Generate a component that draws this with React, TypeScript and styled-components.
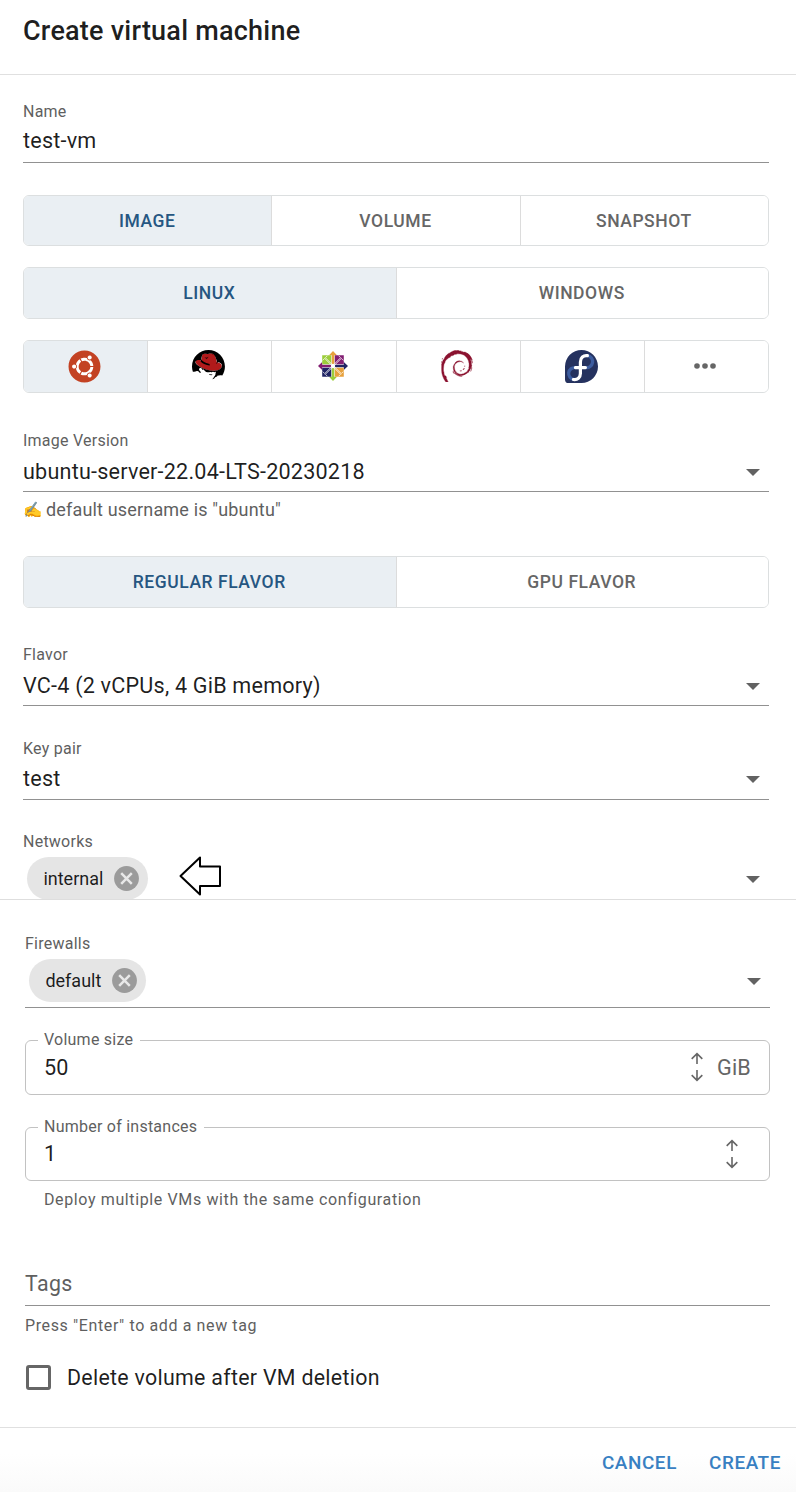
import React from 'react';
import styled, { createGlobalStyle, css } from 'styled-components';
import { SiDebian } from 'react-icons/si';
import { FaUbuntu } from 'react-icons/fa';
import { DiRedhat } from 'react-icons/di';

const GlobalStyle = createGlobalStyle`
  * { box-sizing: border-box; }
  body {
    margin: 0;
    background: #fff;
    color: rgba(0, 0, 0, 0.88);
    font-family: Roboto, "Liberation Sans", sans-serif;
  }
`;

const Dialog = styled.main`
  display: flex;
  flex-direction: column;
  width: 796px;
  height: 1492px;
  overflow: hidden;
`;

const Header = styled.header`
  height: 75px;
  padding: 13px 23px 0;
  border-bottom: 1px solid #e0e0e0;
`;

const Title = styled.h1`
  margin: 0;
  font-size: 27px;
  font-weight: 500;
  line-height: 36px;
  letter-spacing: 0.23px;
`;

const UpperSection = styled.section`
  display: flex;
  flex-direction: column;
  height: 825px;
  padding: 27px 27px 0 23px;
  overflow: hidden;
  border-bottom: 1px solid #dedede;
`;

const LowerSection = styled.section`
  display: flex;
  flex-direction: column;
  height: 528px;
  padding: 34px 26px 0 25px;
  border-bottom: 1px solid #e0e0e0;
`;

const Footer = styled.footer`
  display: flex;
  justify-content: flex-end;
  gap: 32px;
  height: 64px;
  padding: 20px 15px 0 0;
  background: linear-gradient(#fff 40%, #fafafa);
`;

const ActionButton = styled.button`
  height: 30px;
  padding: 0;
  border: 0;
  background: none;
  color: #3880c2;
  font: 500 18.9px/30px Roboto, sans-serif;
  letter-spacing: 0.6px;
`;

const Field = styled.div<{ $top?: number }>`
  flex: none;
  display: flex;
  flex-direction: column;
  margin-top: ${(p) => p.$top ?? 0}px;
  border-bottom: 1px solid #919191;
`;

const Label = styled.label`
  color: #5f5f5f;
  font-size: 16px;
  line-height: 20px;
  letter-spacing: 0.24px;
`;

const ValueRow = styled.div<{ $gap: number; $bottom: number }>`
  display: flex;
  align-items: center;
  justify-content: space-between;
  height: 28px;
  margin: ${(p) => p.$gap}px 0 ${(p) => p.$bottom}px;
  padding-right: 9px;
  font-size: 21.6px;
  line-height: 28px;
  letter-spacing: 0.2px;
`;

const ChipRow = styled(ValueRow)`
  height: 43px;
  padding-left: 4.4px;
`;

const Chip = styled.span`
  display: flex;
  align-items: center;
  height: 43px;
  padding: 0 9px 0 16px;
  gap: 11px;
  border-radius: 22px;
  background: #e5e5e5;
  font-size: 18px;
  letter-spacing: 0;
`;

const ChipGroup = styled.div`
  display: flex;
  align-items: center;
  gap: 31px;
`;

const Caret = styled.span<{ $drop?: number }>`
  margin-top: ${(p) => p.$drop ?? 0}px;
  border: 7px solid transparent;
  border-top-color: #626262;
  border-bottom: 0;
`;

const ToggleGroup = styled.div<{ $top: number; $height: number }>`
  flex: none;
  display: flex;
  height: ${(p) => p.$height}px;
  margin-top: ${(p) => p.$top}px;
  border: 1px solid #dcdfe0;
  border-radius: 6px;
  overflow: hidden;
`;

const Toggle = styled.button<{ $active?: boolean }>`
  flex: 1 1 0;
  display: flex;
  align-items: center;
  justify-content: center;
  padding: 0 1px 0 0;
  border: 0;
  background: #fff;
  color: #666;
  font: 500 17.5px/24px Roboto, sans-serif;
  letter-spacing: 0.55px;
  & + & { border-left: 1px solid #dcdcdc; }
  &:first-child { flex-basis: 1px; }
  ${(p) => p.$active && css`
    background: #eaeff3;
    color: #265681;
  `}
`;

const LogoToggle = styled(Toggle)`
  padding: 0 2px 1px 0;
`;

const Hint = styled.p<{ $top: number; $indent?: number; $spacing?: number }>`
  margin: ${(p) => p.$top}px 0 0 ${(p) => p.$indent ?? 0}px;
  color: #5f5f5f;
  font-size: 16px;
  line-height: 20px;
  letter-spacing: ${(p) => p.$spacing ?? 0.62}px;
`;

const UserHint = styled(Hint)`
  display: flex;
  align-items: center;
  gap: 4px;
  font-size: 18px;
  line-height: 22px;
`;

const Emoji = styled.span`
  font-size: 15.5px;
  letter-spacing: 0;
`;

const Outlined = styled.div<{ $height: number }>`
  position: relative;
  flex: none;
  display: flex;
  align-items: center;
  height: ${(p) => p.$height}px;
  margin-top: 32px;
  padding: 0 18px 1px 18px;
  border: 1px solid #c2c2c2;
  border-radius: 6px;
  font-size: 21.6px;
  letter-spacing: 0.2px;
`;

const Notch = styled(Label)`
  position: absolute;
  top: -11px;
  left: 12px;
  padding: 0 7px 0 6px;
  background: #fff;
`;

const Amount = styled.span`
  flex: 1;
`;

const Stepper = styled.span<{ $right: number }>`
  display: flex;
  margin-right: ${(p) => p.$right}px;
`;

const Unit = styled.span`
  color: #666;
`;

const TagsField = styled(Field)`
  height: 36px;
  color: #5f5f5f;
  font-size: 21.33px;
  line-height: 28px;
  letter-spacing: 0.4px;
`;

const CheckRow = styled.label`
  display: flex;
  align-items: center;
  gap: 16px;
  height: 28px;
  margin: 27px 0 0 1px;
  font-size: 21.4px;
  letter-spacing: 0.28px;
`;

const Box = styled.span`
  width: 25px;
  height: 25px;
  border: 3px solid #666;
  border-radius: 3px;
`;

const UbuntuDisc = styled.span`
  display: flex;
  border-radius: 50%;
  background: radial-gradient(circle, #fff 60%, transparent 61%);
  color: #c34223;
  font-size: 33px;
`;

function RedhatLogo() {
  return (
    <svg width="33" height="33" viewBox="4 5.44 23.9 23.9">
      <path
        fill="#b01a1b"
        d="M6.3 13.4C7.2 12.2 9 12.4 10.7 13L11.4 8.8C12 7.8 13.6 8 15 8.2C17 7.4 19.8 7.6 20.6 8.8L22 14.1C24.6 14.6 25.8 16 25.6 17.5C24.4 20.6 20 20.9 16 20.1C11 19 6.4 16 6.3 13.4Z"
      />
      <DiRedhat size={32} color="#000" />
      <path
        fill="#b01a1b"
        d="M11.3 12.8L12 9.3C12.8 8.3 14 8.6 15.2 8.8C17 8 19.3 8.3 20 9.4L21.3 14.8C18.5 16.3 14 15.6 11.3 12.8Z"
      />
      <path d="M13 10.5l1.2.5 1.8-.6-1.4 1.7z" fill="#2a0708" />
    </svg>
  );
}

function CentosLogo() {
  return (
    <svg width="30" height="30" viewBox="0 0 30 30">
      <path fill="#e7a13d" d="M15 0l4 4.2h-2.7v10.8h-2.6V4.2H11z" />
      <path fill="#202464" d="M30 15l-4.2 4v-2.7H15v-2.6h10.8V11z" />
      <path fill="#9ccd3b" d="M15 30l-4-4.2h2.7V15h2.6v10.8H19z" />
      <path fill="#821e72" d="M0 15l4.2-4v2.7H15v2.6H4.2V19z" />
      <path fill="#9ccd3b" d="M4.2 4.2h9v9h-9z" />
      <path fill="#821e72" d="M16.8 4.2h9v9h-9z" />
      <path fill="#e7a13d" d="M16.8 16.8h9v9h-9z" />
      <path fill="#202464" d="M4.2 16.8h9v9h-9z" />
      <g stroke="#fff" strokeWidth="0.75" fill="none">
        <path d="M9.4 4.7l-2 2L15 14.3l7.6-7.6-2-2M9.4 25.3l-2-2L15 15.7l7.6 7.6-2 2" />
        <path d="M4.7 9.4l2-2L14.3 15l-7.6 7.6-2-2M25.3 9.4l-2-2L15.7 15l7.6 7.6 2-2" />
      </g>
      <circle cx="15" cy="15" r="2.2" fill="#fff" />
    </svg>
  );
}

function DebianLogo() {
  return (
    <svg width="32" height="32.5" viewBox="2.2 0 19.6 19.9">
      <SiDebian size={24} color="#8b1230" stroke="#8b1230" strokeWidth={0.2} />
    </svg>
  );
}

function FedoraLogo() {
  return (
    <svg width="33" height="33" viewBox="0 0 33 33" fill="none" strokeLinecap="round">
      <path fill="#25325f" d="M16.5 0a16.5 16.5 0 0 1 0 33H3.6A3.6 3.6 0 0 1 0 29.4V16.5A16.5 16.5 0 0 1 16.5 0z" />
      <g stroke="#3c5c9f" strokeWidth="3.3">
        <path d="M22.5 5.7a5.9 5.9 0 0 1-1.8 11.9" />
        <path d="M10.3 17.6a5.9 5.9 0 0 0-1.4 11.8" />
      </g>
      <path
        stroke="#fff"
        strokeWidth="3.2"
        d="M22.4 5.7c-4-.6-7 2-7 6.2V23.6c0 4-2.9 6.5-7 5.9M10.4 17.6H20.4"
      />
    </svg>
  );
}

function MoreDots() {
  return (
    <svg width="22" height="6" viewBox="0 0 22 6" fill="#666">
      <circle cx="3" cy="3" r="2.8" />
      <circle cx="11" cy="3" r="2.8" />
      <circle cx="19" cy="3" r="2.8" />
    </svg>
  );
}

function ClearIcon() {
  return (
    <svg width="25" height="25" viewBox="0 0 25 25">
      <circle cx="12.5" cy="12.5" r="12.4" fill="#9b9b9b" />
      <path d="M7.2 7.2L17.8 17.8M17.8 7.2L7.2 17.8" stroke="#e8e8e8" strokeWidth="2.5" />
    </svg>
  );
}

const PointerSvg = styled.svg`
  margin-bottom: 6px;
`;

function PointerArrow() {
  return (
    <PointerSvg width="42" height="40" viewBox="0 0 42 40" fill="#fff" stroke="#000" strokeWidth="2">
      <path d="M1.5 20L21 1.5V10.5H41V30H21V38.5Z" strokeLinejoin="round" />
    </PointerSvg>
  );
}

function UpDown() {
  return (
    <svg width="14" height="30" viewBox="0 0 14 30" fill="none" stroke="#666" strokeWidth="1.6">
      <path d="M7 12V1.8M1.7 6.9L7 1.6L12.3 6.9" />
      <path d="M7 18V28.2M1.7 23.1L7 28.4L12.3 23.1" />
    </svg>
  );
}

interface SelectFieldProps {
  label: string;
  value: string;
  top: number;
  gap?: number;
}

function SelectField({ label, value, top, gap = 7 }: SelectFieldProps) {
  return (
    <Field $top={top}>
      <Label>{label}</Label>
      <ValueRow $gap={gap} $bottom={12 - gap}>
        {value}
        <Caret />
      </ValueRow>
    </Field>
  );
}

export default function App() {
  return (
    <>
      <GlobalStyle />
      <Dialog>
        <Header>
          <Title>Create virtual machine</Title>
        </Header>
        <UpperSection>
          <Field>
            <Label>Name</Label>
            <ValueRow $gap={5} $bottom={7}>test-vm</ValueRow>
          </Field>
          <ToggleGroup $top={32} $height={51}>
            <Toggle $active>IMAGE</Toggle>
            <Toggle>VOLUME</Toggle>
            <Toggle>SNAPSHOT</Toggle>
          </ToggleGroup>
          <ToggleGroup $top={21} $height={52}>
            <Toggle $active>LINUX</Toggle>
            <Toggle>WINDOWS</Toggle>
          </ToggleGroup>
          <ToggleGroup $top={21} $height={53}>
            <LogoToggle $active aria-label="Ubuntu"><UbuntuDisc><FaUbuntu /></UbuntuDisc></LogoToggle>
            <LogoToggle aria-label="Red Hat"><RedhatLogo /></LogoToggle>
            <LogoToggle aria-label="CentOS"><CentosLogo /></LogoToggle>
            <LogoToggle aria-label="Debian"><DebianLogo /></LogoToggle>
            <LogoToggle aria-label="Fedora"><FedoraLogo /></LogoToggle>
            <LogoToggle aria-label="More"><MoreDots /></LogoToggle>
          </ToggleGroup>
          <SelectField label="Image Version" value="ubuntu-server-22.04-LTS-20230218" top={38} />
          <UserHint $top={7} $spacing={0.17}>
            <Emoji>✍️</Emoji>
            default username is "ubuntu"
          </UserHint>
          <ToggleGroup $top={35} $height={52}>
            <Toggle $active>REGULAR FLAVOR</Toggle>
            <Toggle>GPU FLAVOR</Toggle>
          </ToggleGroup>
          <SelectField label="Flavor" value="VC-4 (2 vCPUs, 4 GiB memory)" top={37} />
          <SelectField label="Key pair" value="test" top={33} gap={6} />
          <Field $top={32}>
            <Label>Networks</Label>
            <ChipRow $gap={5} $bottom={5}>
              <ChipGroup>
                <Chip>internal<ClearIcon /></Chip>
                <PointerArrow />
              </ChipGroup>
              <Caret $drop={2} />
            </ChipRow>
          </Field>
        </UpperSection>
        <LowerSection>
          <Field>
            <Label>Firewalls</Label>
            <ChipRow $gap={5} $bottom={5}>
              <Chip>default<ClearIcon /></Chip>
              <Caret $drop={2} />
            </ChipRow>
          </Field>
          <Outlined $height={55}>
            <Notch>Volume size</Notch>
            <Amount>50</Amount>
            <Stepper $right={13}><UpDown /></Stepper>
            <Unit>GiB</Unit>
          </Outlined>
          <Outlined $height={54}>
            <Notch>Number of instances</Notch>
            <Amount>1</Amount>
            <Stepper $right={12}><UpDown /></Stepper>
          </Outlined>
          <Hint $top={9} $indent={19}>Deploy multiple VMs with the same configuration</Hint>
          <TagsField $top={60}>Tags</TagsField>
          <Hint $top={10}>Press "Enter" to add a new tag</Hint>
          <CheckRow><Box />Delete volume after VM deletion</CheckRow>
        </LowerSection>
        <Footer>
          <ActionButton>CANCEL</ActionButton>
          <ActionButton>CREATE</ActionButton>
        </Footer>
      </Dialog>
    </>
  );
}
